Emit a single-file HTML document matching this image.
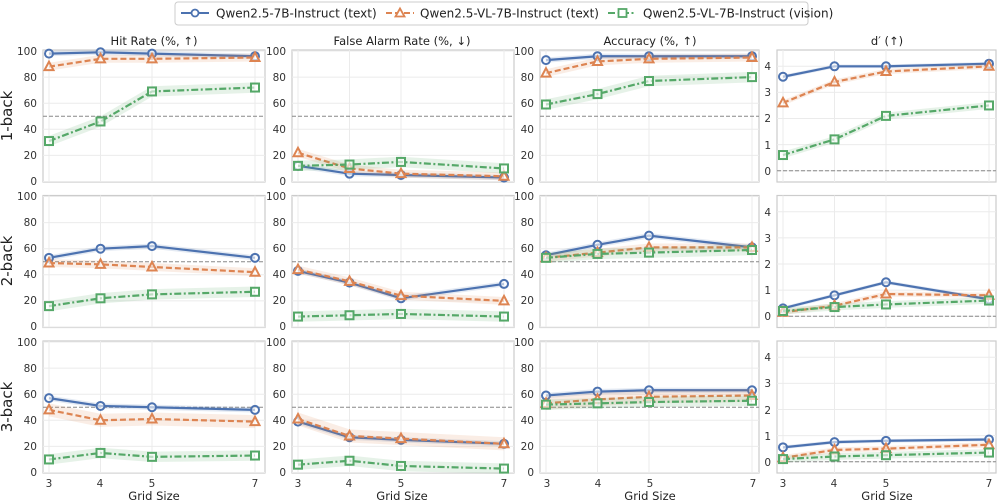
<!DOCTYPE html>
<html><head><meta charset="utf-8"><style>
body{margin:0;background:#fff;width:997px;height:503px;overflow:hidden}
svg{display:block;font-family:"DejaVu Sans","Liberation Sans",sans-serif}
.ti{font-size:11.5px;fill:#222;text-anchor:middle}
.yl{font-size:10.5px;fill:#333;text-anchor:end}
.xl{font-size:10.5px;fill:#333;text-anchor:middle}
.rl{font-size:15px;fill:#222;text-anchor:middle}
.lg{font-size:12px;fill:#222}
</style></head><body>
<svg id="s" width="997" height="503" viewBox="0 0 997 503" xmlns="http://www.w3.org/2000/svg">
<g id="g"></g>
<rect x="175" y="2" width="633" height="23" rx="3" fill="#fff" stroke="#ccc"/>
<line x1="181" y1="13" x2="209" y2="13" stroke="#4c72b0" stroke-width="2"/>
<circle cx="195" cy="13" r="3.5" fill="#fff" stroke="#4c72b0" stroke-width="1.8"/>
<text class="lg" x="216" y="17.5">Qwen2.5-7B-Instruct (text)</text>
<line x1="386" y1="13" x2="414" y2="13" stroke="#dd8452" stroke-width="2" stroke-dasharray="6,3"/>
<path d="M400 8.5 L404.5 16.5 L395.5 16.5Z" fill="#fff" stroke="#dd8452" stroke-width="1.8"/>
<text class="lg" x="420" y="17.5">Qwen2.5-VL-7B-Instruct (text)</text>
<line x1="608" y1="13" x2="636" y2="13" stroke="#55a868" stroke-width="2" stroke-dasharray="7,2.5,2,2.5"/>
<rect x="618.5" y="9" width="8" height="8" fill="#fff" stroke="#55a868" stroke-width="1.8"/>
<text class="lg" x="643" y="17.5">Qwen2.5-VL-7B-Instruct (vision)</text>
<text class="ti" x="154" y="45">Hit Rate (%, ↑)</text>
<text class="ti" x="402" y="45">False Alarm Rate (%, ↓)</text>
<text class="ti" x="650" y="45">Accuracy (%, ↑)</text>
<text class="ti" x="887" y="45">d′ (↑)</text>
<text class="rl" transform="translate(12,116) rotate(-90)">1-back</text>
<text class="rl" transform="translate(12,261) rotate(-90)">2-back</text>
<text class="rl" transform="translate(12,407) rotate(-90)">3-back</text>
<g class="yl">
<text x="37" y="55">100</text><text x="37" y="81">80</text><text x="37" y="107">60</text><text x="37" y="133">40</text><text x="37" y="159">20</text><text x="37" y="185">0</text>
<text x="286" y="55">100</text><text x="286" y="81">80</text><text x="286" y="107">60</text><text x="286" y="133">40</text><text x="286" y="159">20</text><text x="286" y="185">0</text>
<text x="534" y="55">100</text><text x="534" y="81">80</text><text x="534" y="107">60</text><text x="534" y="133">40</text><text x="534" y="159">20</text><text x="534" y="185">0</text>
<text x="37" y="200">100</text><text x="37" y="226">80</text><text x="37" y="252">60</text><text x="37" y="278">40</text><text x="37" y="304">20</text><text x="37" y="330">0</text>
<text x="286" y="200">100</text><text x="286" y="226">80</text><text x="286" y="252">60</text><text x="286" y="278">40</text><text x="286" y="304">20</text><text x="286" y="330">0</text>
<text x="534" y="200">100</text><text x="534" y="226">80</text><text x="534" y="252">60</text><text x="534" y="278">40</text><text x="534" y="304">20</text><text x="534" y="330">0</text>
<text x="37" y="346">100</text><text x="37" y="372">80</text><text x="37" y="398">60</text><text x="37" y="424">40</text><text x="37" y="450">20</text><text x="37" y="476">0</text>
<text x="286" y="346">100</text><text x="286" y="372">80</text><text x="286" y="398">60</text><text x="286" y="424">40</text><text x="286" y="450">20</text><text x="286" y="476">0</text>
<text x="534" y="346">100</text><text x="534" y="372">80</text><text x="534" y="398">60</text><text x="534" y="424">40</text><text x="534" y="450">20</text><text x="534" y="476">0</text>
<text x="771" y="175">0</text><text x="771" y="149">1</text><text x="771" y="122">2</text><text x="771" y="96">3</text><text x="771" y="70">4</text>
<text x="771" y="320">0</text><text x="771" y="294">1</text><text x="771" y="268">2</text><text x="771" y="242">3</text><text x="771" y="216">4</text>
<text x="771" y="466">0</text><text x="771" y="440">1</text><text x="771" y="414">2</text><text x="771" y="387">3</text><text x="771" y="361">4</text>
</g>
<g class="xl">
<text x="49" y="487">3</text><text x="100" y="487">4</text><text x="152" y="487">5</text><text x="255" y="487">7</text>
<text x="298" y="487">3</text><text x="349" y="487">4</text><text x="401" y="487">5</text><text x="504" y="487">7</text>
<text x="547" y="487">3</text><text x="598" y="487">4</text><text x="650" y="487">5</text><text x="753" y="487">7</text>
<text x="783" y="487">3</text><text x="834" y="487">4</text><text x="886" y="487">5</text><text x="989" y="487">7</text>
</g>
<g class="ti">
<text x="154" y="500">Grid Size</text><text x="402" y="500">Grid Size</text><text x="650" y="500">Grid Size</text><text x="887" y="500">Grid Size</text>
</g>
</svg>
<script>
(function(){
var NS="http://www.w3.org/2000/svg",g=document.getElementById("g");
function el(n,a){var e=document.createElementNS(NS,n);for(var k in a)e.setAttribute(k,a[k]);g.appendChild(e);return e;}
var L=[43,292,540,777],W=[222,222,219,219],T=[50,195.5,341],H=132,X=[3,4,5,7];
var D=[
[[[98,99,98,96],[88,94,94,95],[31,46,69,72]],[[12,6,5,3],[22,10,6,4],[12,13,15,10]],[[93,96,96,96],[83,92,94,95],[59,67,77,80]],[[3.6,4.0,4.0,4.1],[2.6,3.4,3.8,4.0],[0.6,1.2,2.1,2.5]]],
[[[53,60,62,53],[49,48,46,42],[16,22,25,27]],[[43,34,22,33],[44,35,24,20],[8,9,10,8]],[[55,63,70,61],[53,57,61,61],[53,56,57,59]],[[0.3,0.8,1.3,0.65],[0.15,0.4,0.85,0.8],[0.2,0.35,0.45,0.6]]],
[[[57,51,50,48],[48,40,41,39],[10,15,12,13]],[[39,27,25,22],[41,28,26,22],[6,9,5,3]],[[59,62,63,63],[53,56,58,59],[52,53,54,55]],[[0.55,0.75,0.8,0.85],[0.15,0.45,0.5,0.65],[0.1,0.2,0.25,0.35]]]];
var C=["#4c72b0","#dd8452","#55a868"],DA=["","6,3","7,2.5,2,2.5"],BW=[[2,2,2,1],[3,3,5,4],[4,4,4,3]];
for(var r=0;r<3;r++)for(var c=0;c<4;c++){
 var l=L[c],t=T[r],w=W[c];
 var fx=function(v){return l+6+(v-3)*51.5;};
 var dp=c==3,fy=dp?function(v){return t+120.7-v*26.1;}:function(v){return t+1+(100-v)*1.305;};
 el("rect",{x:l,y:t,width:w,height:H,fill:"#fff",stroke:"#ccc","stroke-width":1.2});
 X.forEach(function(x){el("line",{x1:fx(x),x2:fx(x),y1:t,y2:t+H,stroke:"#ebebeb"});});
 (dp?[0,1,2,3,4]:[0,20,40,60,80,100]).forEach(function(v){el("line",{x1:l,x2:l+w,y1:fy(v),y2:fy(v),stroke:"#ebebeb"});});
 var ref=dp?0:50;el("line",{x1:l,x2:l+w,y1:fy(ref),y2:fy(ref),stroke:"#888","stroke-dasharray":"4,2","stroke-width":1});
 for(var s=0;s<3;s++){
  var d=D[r][c][s],b=dp?0.07+0.03*s:BW[s][r];
  var up=d.map(function(v,i){return fx(X[i])+","+fy(v+b);}),dn=d.map(function(v,i){return fx(X[i])+","+fy(v-b);}).reverse();
  el("polygon",{points:up.concat(dn).join(" "),fill:C[s],"fill-opacity":0.15});
  el("polyline",{points:d.map(function(v,i){return fx(X[i])+","+fy(v);}).join(" "),fill:"none",stroke:C[s],"stroke-width":2.2,"stroke-dasharray":DA[s]});
  d.forEach(function(v,i){var x=fx(X[i]),y=fy(v);
   if(s==0)el("circle",{cx:x,cy:y,r:4,fill:"#fff","fill-opacity":0.6,stroke:C[0],"stroke-width":2});
   else if(s==1)el("path",{d:"M"+x+" "+(y-5)+"L"+(x+4.5)+" "+(y+3.5)+"L"+(x-4.5)+" "+(y+3.5)+"Z",fill:"#fff","fill-opacity":0.6,stroke:C[1],"stroke-width":2});
   else el("rect",{x:x-4,y:y-4,width:8,height:8,fill:"#fff","fill-opacity":0.6,stroke:C[2],"stroke-width":2});
  });
 }
}
})();
</script>
</body></html>
